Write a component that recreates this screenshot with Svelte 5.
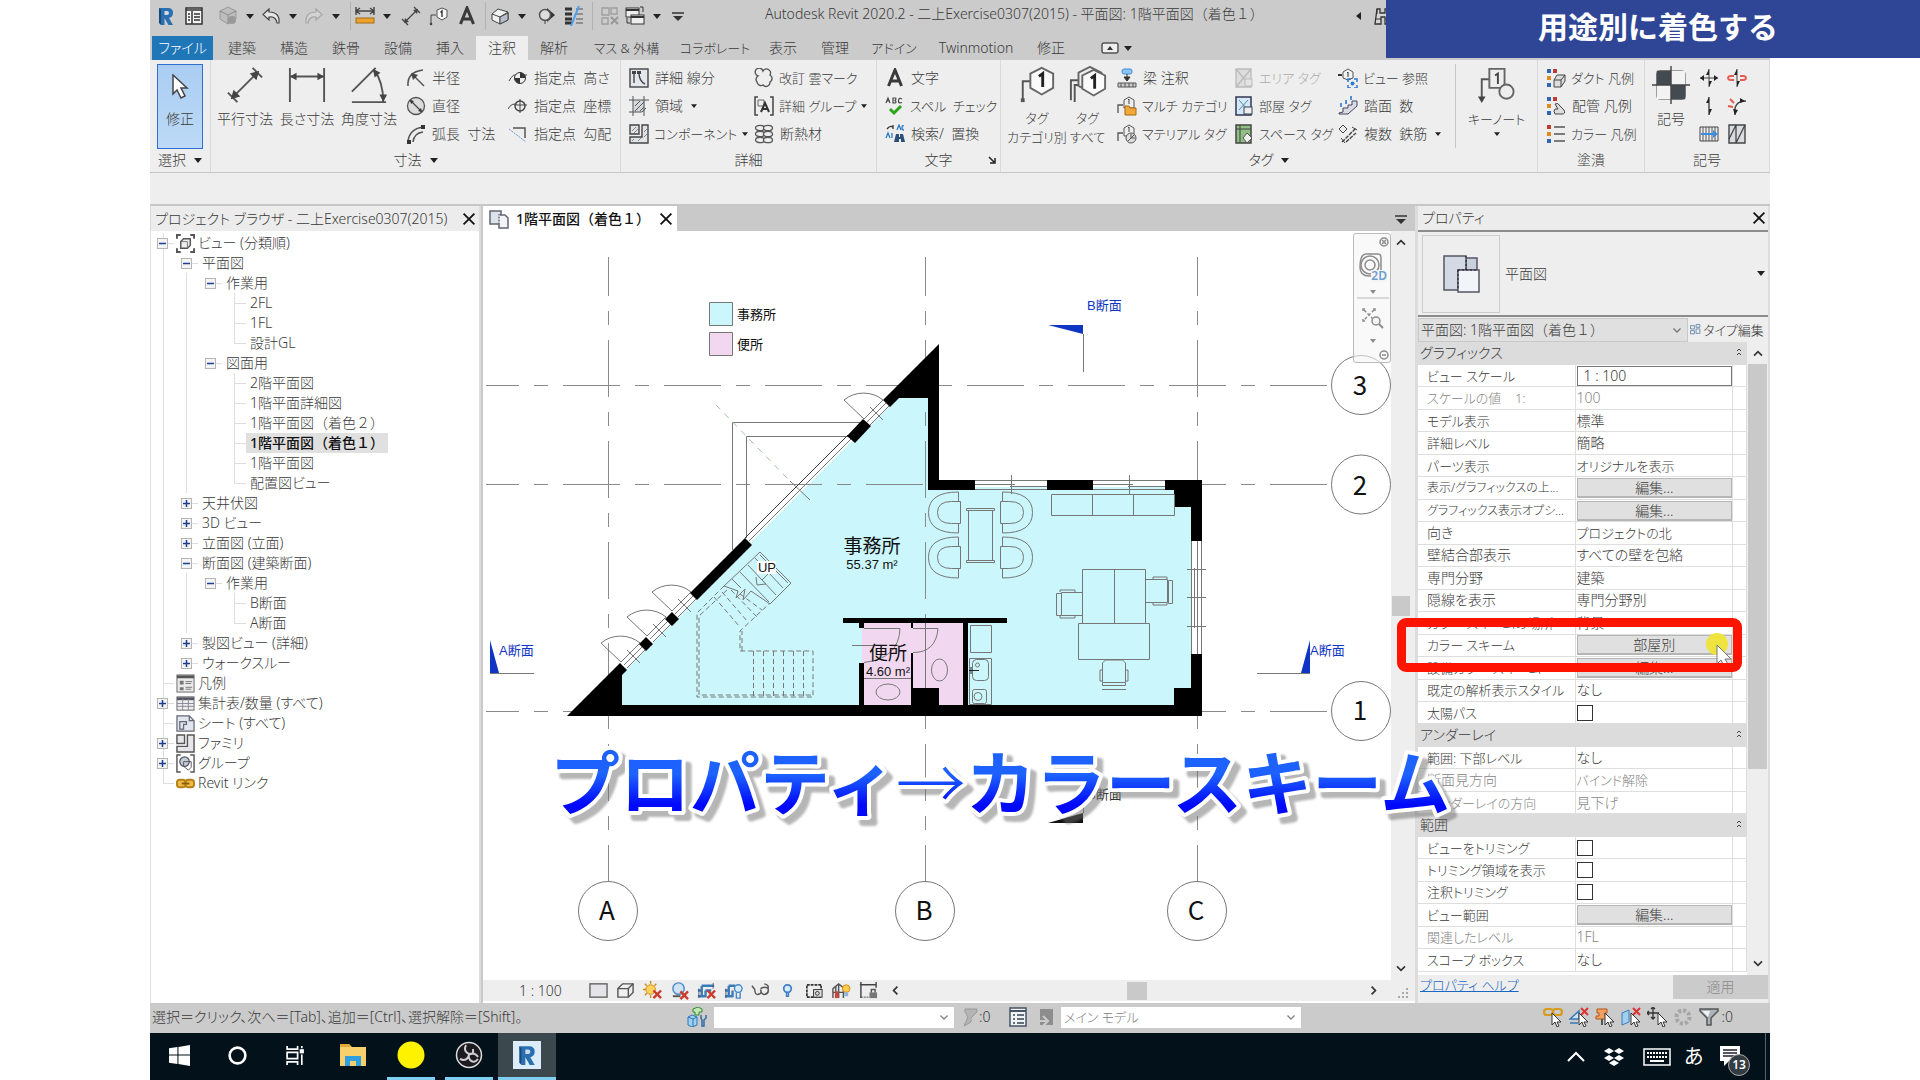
<script lang="ts">
  const icons: Record<string, string> = {
    revit: '<path d="M3 2h9q5 0 5 5 0 4-4 5l4 7h-4.500l-4-7v7H5z" fill="#2a6fb0"/><path d="M8.500 5v4h2.500q2 0 2-2t-2-2z" fill="#cfdcea"/><path d="M3 2l2 2v15l-2-2z" fill="#174a7c"/>',
    panel: '<rect x="2" y="2" width="16" height="16" fill="#f4f4f4" stroke="#333" stroke-width="1.500"/><path d="M2 4h16M8 5v13M4 8h2M4 11h2M4 14h2M10 8h6M10 11h6M10 14h6" stroke="#333" stroke-width="1.500"/>',
    cube: '<path d="M10 1l8 4v8l-8 5-8-5V5z" fill="#bdbdbd" stroke="#999"/><path d="M2 5l8 4 8-4M10 9v9" stroke="#8d8d8d"/><circle cx="14" cy="14" r="4" fill="#999"/>',
    undo: '<path d="M8 3L2 8.500 8 14v-3q7-1 8 6h2q1-11-10-11z" fill="#e6e6e6" stroke="#444" stroke-width="1.200"/>',
    redo: '<path d="M12 3l6 5.500-6 5.500v-3q-7-1-8 6H2Q1 6 12 6z" fill="#d3d3d3" stroke="#a5a5a5" stroke-width="1.200"/>',
    measure: '<path d="M1 5h18M5 2L1 5l4 3M15 2l4 3-4 3M1 1v8M19 1v8" stroke="#444" stroke-width="1.400"/><rect x="1" y="12" width="18" height="5" fill="#eba32d" stroke="#a46b12"/>',
    align: '<path d="M4 16L16 4M1 13l6 6M13 1l6 6" stroke="#444" stroke-width="1.300"/><path d="M3 17l1-5 4 4zM17 3l-1 5-4-4z" fill="#444"/>',
    tagq: '<path d="M2 18V9h5" stroke="#444"/><circle cx="2" cy="18" r="1.300" fill="#444"/><path d="M8 4l5-2 5 2v7l-5 3-5-3z" fill="#f8f8f8" stroke="#555"/><path d="M11.500 6.500L13 5v6" stroke="#333" stroke-width="1.400"/>',
    bigA: '<path d="M3.500 18L10 2l6.500 16M6 13h8" stroke="#3a3a3a" stroke-width="3"/>',
    house: '<path d="M2 8l6-5 10 3v8l-8 4-8-4z" fill="#f2f2f2" stroke="#444"/><path d="M2 8l8 3 8-5M10 11v7" stroke="#444"/><path d="M10 11l8-4v7l-8 4z" fill="#b7bfcc" stroke="#444"/>',
    section: '<path d="M11 2l8 7-8 7z" fill="#333"/><circle cx="9" cy="9" r="5.500" fill="#ddd" stroke="#555" stroke-width="1.500"/><path d="M9 14v4" stroke="#444"/>',
    thin: '<path d="M1 3h7M1 8h7M1 13h7M1 17h7" stroke="#333" stroke-width="3"/><path d="M12 3h7M12 8h7M12 13h7M12 17h7" stroke="#555"/><path d="M15 0L7 20" stroke="#4aa0ee" stroke-width="2"/>',
    hidden: '<path d="M2 2h7v7H2zM11 2h6v6h-6zM2 12h6v6H2z" stroke="#a0a0a0" stroke-width="1.400"/><path d="M11 11l7 7M18 11l-7 7" stroke="#999" stroke-width="2"/>',
    swap: '<rect x="1" y="2" width="13" height="9" fill="#eee" stroke="#333"/><rect x="6" y="9" width="13" height="9" fill="#eee" stroke="#333"/><path d="M1 4h13M6 11h13" stroke="#333" stroke-width="2"/><path d="M15 1h3v5M2 12v5h3" stroke="#333"/>',
    custom: '<path d="M4 7h12" stroke="#333" stroke-width="1.500"/><path d="M5 10h10l-5 5z" fill="#333"/>',
    binoc: '<path d="M4 3h3v4h5V3h3l3 15h-6v-7H8v7H2z" fill="#d6d6d6" stroke="#333" stroke-width="1.300"/><path d="M2 13h6M12 13h6M4 3v5M15 3v5" stroke="#333"/>',
    radius: '<path d="M2 18Q1 4 17 2" stroke="#555" stroke-width="1.600"/><path d="M7 7l11 11" stroke="#555" stroke-width="1.400"/><path d="M5 5l7 2-5 5z" fill="#444"/>',
    diameter: '<circle cx="10" cy="10" r="8.500" fill="#dcdcdc" stroke="#555" stroke-width="1.300"/><path d="M4 4l12 12" stroke="#444" stroke-width="1.300"/><path d="M4 4l4 1-3 3zM16 16l-4-1 3-3z" fill="#333"/>',
    arclen: '<path d="M2 18Q3 5 17 3" stroke="#555" stroke-width="1.500"/><path d="M7 18Q8 9 17 8" stroke="#555" stroke-width="1.500"/><path d="M15 1h4v4h-4zM1 16h4v4H1z" fill="#333"/>',
    elev: '<path d="M1 13q4-8 9-6h9" stroke="#444"/><circle cx="12" cy="10" r="5.500" fill="#eee" stroke="#333"/><path d="M12 10V4.500A5.500 5.500 0 0117.500 10zM12 10v5.500A5.500 5.500 0 016.500 10z" fill="#333"/>',
    coord: '<path d="M0 13q4-7 9-4h10M12 3v14" stroke="#444"/><circle cx="12" cy="10" r="5" fill="none" stroke="#444" stroke-width="1.500"/>',
    slope: '<path d="M1 5l17 13" stroke="#6a9bd0" stroke-dasharray="2 1"/><path d="M5 4h12v10" stroke="#555" stroke-width="1.500"/>',
    dline: '<rect x="1" y="1" width="18" height="18" fill="#e4e8ee" stroke="#444" stroke-width="1.400"/><path d="M5 5v10M10 5q0 8 6 11" stroke="#444" stroke-width="1.400"/><path d="M3 3h4v3H3zM8 3h4v3H8z" fill="#444"/>',
    region: '<rect x="4" y="4" width="12" height="12" fill="#d5d8dc"/><path d="M4 0v20M15 0v20M0 4h20M0 16h13l4-4M6 10l5-5M6 15l9-9M11 15l4-4" stroke="#555"/>',
    comp: '<path d="M1 1h9v9H1zM13 1h6v18H1v-6h12z" fill="#dfe2e6" stroke="#444" stroke-width="1.400"/><path d="M3 7l4-4M5 9l4-4M3 17l2-2M9 17l3-3M15 8l3-3M15 13l3-3" stroke="#888"/>',
    cloud: '<path d="M4 8a4 4 0 115-5 4 4 0 017 4 4 4 0 010 7 4 4 0 01-7 3 4 4 0 01-6-3 4 4 0 011-6z" fill="#eee" stroke="#555" stroke-width="1.400"/>',
    dgroup: '<path d="M4 1H1v18h3M16 1h3v18h-3" stroke="#444" stroke-width="1.500"/><path d="M4 4h6v6H4z" stroke="#666"/><path d="M7 16l4-9 4 9M9 13h4" stroke="#333" stroke-width="2"/>',
    insul: '<g stroke="#555" stroke-width="1.300" fill="#eee"><ellipse cx="6" cy="4" rx="4.500" ry="2.700"/><ellipse cx="14" cy="4" rx="4.500" ry="2.700"/><ellipse cx="6" cy="10" rx="4.500" ry="2.700"/><ellipse cx="14" cy="10" rx="4.500" ry="2.700"/><ellipse cx="6" cy="16" rx="4.500" ry="2.700"/><ellipse cx="14" cy="16" rx="4.500" ry="2.700"/></g>',
    spell: '<path d="M1 7l2-5 2 5M2 5h2M8 2v5h2q2-1 0-2.500Q12 2 10 2zM17 3q-3-2-3.500 1.500T17 6.500" stroke="#444" stroke-width="1.200"/><path d="M5 13l4 4 7-7" stroke="#2ea31c" stroke-width="3"/>',
    find: '<path d="M2 5q3-4 6-2M8 1v4" stroke="#333" stroke-width="1.300"/><path d="M12 6l2-5 2 5M19 2q-2-1-2 1.500T19 6M1 14l2-5 2 5M7 9v5" stroke="#2d78c8" stroke-width="1.300"/><path d="M9 18l2-8h3v3h1v-3h3l2 8h-4v-3h-2v3z" fill="#2c4f78"/>',
    beam: '<rect x="5" y="1" width="10" height="5" rx="2" fill="#8cc4f7" stroke="#3f8edb"/><path d="M10 6v5M7 9l3 4 3-4z" stroke="#333" fill="#333"/><path d="M1 15h18v4H1z" fill="#ccc" stroke="#555"/><path d="M4 15v4M8 15v4M12 15v4M16 15v4" stroke="#555"/>',
    multi: '<path d="M1 17V9h5" stroke="#555" stroke-width="1.300"/><path d="M7 4l5-3 5 3v8H7z" fill="#eee" stroke="#555"/><path d="M11 4l1-1v5" stroke="#444"/><path d="M8 10h4l1 2h6v7H8z" fill="#f1a93a" stroke="#a8690c"/>',
    mat: '<path d="M1 17V9h5" stroke="#555" stroke-width="1.300"/><path d="M7 4l5-3 5 3v8H7z" fill="#eee" stroke="#555"/><path d="M11 4l1-1v5" stroke="#444"/><circle cx="14" cy="14" r="5" fill="#ddd" stroke="#555"/><path d="M11 17l6-6M14 10v4h4" stroke="#555"/>',
    area: '<path d="M2 1h15v18H2zM2 1l15 18M17 1L2 19" fill="#ddd" stroke="#bbb" stroke-width="1.300"/><rect x="11" y="11" width="7" height="7" fill="#e4e4e4" stroke="#bbb"/>',
    room: '<path d="M2 1h15v18H2z" fill="#d5e8f6" stroke="#335" stroke-width="1.500"/><path d="M5 4l9 10M14 4L5 14" stroke="#58a" /><rect x="10" y="11" width="8" height="7" fill="#eee" stroke="#345"/>',
    space: '<path d="M2 1h15v18H2z" fill="#8fbf83" stroke="#444" stroke-width="1.500"/><path d="M2 5h15M6 1v18" stroke="#444"/><path d="M13 9l5 5-5 5-4-5z" fill="#eee" stroke="#555"/>',
    viewref: '<path d="M0 7h4" stroke="#333" stroke-width="2"/><path d="M5 4l5-3 5 3v6l-5 2-5-2z" fill="#f3f3f3" stroke="#555"/><path d="M9 5l1-1v5" stroke="#333"/><path d="M10 14v-3h3M16 11h3v3M19 17v3h-3M13 20h-3v-3" stroke="#2b78d0" stroke-width="1.500"/><circle cx="14.500" cy="15.500" r="2" fill="#2b78d0"/>',
    stepn: '<path d="M1 17l4-1v-4h5V9h4V5h5v5l-9 8H1z" fill="#d9dde2" stroke="#446"/><path d="M3 7v4M8 4v4M13 0v4" stroke="#2b78d0" stroke-width="1.600"/>',
    rebar: '<path d="M5 1l4 4-4 4-4-4z" fill="#eee" stroke="#444"/><path d="M4 18L18 4M8 18L18 9" stroke="#444" stroke-width="1.400" stroke-dasharray="4 1"/><path d="M3 14l4 5M14 3l5 3" stroke="#444"/>',
    duct: '<path d="M1 1h4v4H1z" fill="#2e66b5"/><path d="M7 1h4v4H7z" fill="#c0392b"/><path d="M1 8h4v4H1z" fill="#e08a1e"/><path d="M1 15h4v4H1z" fill="#2e66b5"/><path d="M8 12l3-5h8v6l-4 6H8z" fill="#ddd" stroke="#444"/><path d="M8 12h7v7M15 12l4-5" stroke="#444"/>',
    pipe: '<path d="M1 1h4v4H1z" fill="#2e66b5"/><path d="M7 1h4v4H7z" fill="#c0392b"/><path d="M1 8h4v4H1z" fill="#e08a1e"/><path d="M1 15h4v4H1z" fill="#2e66b5"/><path d="M9 8q3-2 5 2l4 4q2 4-2 4H9q-2-3 0-5h3z" fill="#ddd" stroke="#444"/>',
    color: '<path d="M1 1h4v4H1z" fill="#c0392b"/><path d="M1 8h4v4H1z" fill="#e08a1e"/><path d="M1 15h4v4H1z" fill="#2e66b5"/><path d="M8 3h11M8 10h11M8 17h11" stroke="#555" stroke-width="1.500"/>',
    s1: '<path d="M10 1v18M1 10h18" stroke="#444"/><path d="M10 1l-3 6h3zM10 19l3-6h-3z" fill="#222"/><path d="M1 10l4-3v6zM19 10l-4-3v6z" fill="#222"/>',
    s2: '<path d="M10 1v18" stroke="#444"/><path d="M10 1l-3 6h3zM10 19l3-6h-3z" fill="#222"/><path d="M7 8H4q-3 0-3 2t3 2h3M13 8h3q3 0 3 2t-3 2h-3" stroke="#e35b50" stroke-width="1.800"/>',
    s3: '<path d="M10 1v18" stroke="#444" stroke-width="1.400"/><path d="M10 1l-3 6h3zM10 19l3-6h-3z" fill="#222"/>',
    s4: '<path d="M19 5Q6 5 8 19" stroke="#444" stroke-width="1.400"/><path d="M13 2l5 3-5 2zM6 13l2 6 3-5z" fill="#222"/><path d="M1 10l5 1M3 3l4 4" stroke="#e35b50" stroke-width="2"/>',
    s5: '<path d="M1 3h18v14H1z" fill="#eee" stroke="#444"/><path d="M4 3v14M7 3v14M10 3v14M13 3v14M16 3v14" stroke="#555"/><path d="M2 10h14" stroke="#3d8de0" stroke-width="2"/><path d="M14 6l5 4-5 4z" fill="#3d8de0"/>',
    s6: '<path d="M2 1h16v18H2z" fill="#d9dce0" stroke="#444" stroke-width="1.400"/><path d="M2 15L9 1v18L18 1M9 1v18" stroke="#444" stroke-width="1.300"/>',
    views: '<path d="M1 5V1h4M15 1h4v4M19 15v4h-4M5 19H1v-4" stroke="#555" stroke-width="2"/><path d="M5 8l3-3h7v7l-3 3H5z" fill="#eee" stroke="#555" stroke-width="1.500"/><path d="M5 8h7v7" stroke="#777"/>',
    legend: '<rect x="1" y="1" width="18" height="18" fill="#eaeaea" stroke="#666"/><path d="M1 3h18" stroke="#555" stroke-width="3"/><path d="M4 7h4v4H4zM4 14h4v3H4z" fill="#777"/><path d="M10 8h7M10 10h6M10 14h7M10 16h6" stroke="#777"/>',
    sched: '<rect x="1" y="3" width="18" height="14" fill="#eee" stroke="#666"/><path d="M1 5h18" stroke="#556" stroke-width="3"/><path d="M1 10h18M1 13h18M7 5v12M13 5v12" stroke="#889"/>',
    sheet: '<path d="M1 2h13l5 5v11H1z" fill="#dfe6ee" stroke="#667" stroke-width="1.300"/><path d="M14 2v5h5M4 8h7v3h-3v5H4z" stroke="#667" stroke-width="1.300"/>',
    family: '<path d="M1 1h8v9H1zM12 1h7v18H1v-6h11z" fill="#e6e6ea" stroke="#555" stroke-width="1.500"/>',
    group: '<path d="M5 1H1v18h4M15 1h4v18h-4" stroke="#555" stroke-width="1.500"/><circle cx="9" cy="8" r="5" fill="#c6ccd6" stroke="#556" stroke-width="1.300"/><path d="M8 8h8v6l-3 3-5-4z" stroke="#556"/>',
    link: '<rect x="1" y="6" width="9" height="8" rx="3" fill="#eebb44" stroke="#b5801a" stroke-width="2"/><rect x="10" y="6" width="9" height="8" rx="3" fill="#eebb44" stroke="#b5801a" stroke-width="2"/><path d="M6 10h8" stroke="#8a5d0c" stroke-width="2"/>',
    plan: '<path d="M1 2h11v13H1z" fill="#dde3ea" stroke="#667" stroke-width="1.500"/><path d="M10 6h6l3 3v10h-9z" fill="#f2f4f7" stroke="#667" stroke-width="1.500"/><path d="M10 6v9" stroke="#fff" stroke-dasharray="2 1"/>',
    detail: '<rect x="1" y="3" width="18" height="14" fill="#e4e4e8" stroke="#666" stroke-width="1.500"/>',
    box: '<path d="M2 8l5-5h11v9l-5 5H2z" fill="#f0f0f0" stroke="#555" stroke-width="1.500"/><path d="M2 8h11v9M13 8l5-5" stroke="#555" stroke-width="1.500"/>',
    sun: '<circle cx="8" cy="9" r="5" fill="#ffd25a" stroke="#c98a1e"/><path d="M8 0v3M8 15v3M0 9h3M2 3l2 2M14 3l-2 2M2 15l2-2" stroke="#c98a1e" stroke-width="1.500"/><path d="M11 10l8 8M19 10l-8 8" stroke="#cc3a2a" stroke-width="2.500"/>',
    shadow: '<circle cx="9" cy="8" r="6" fill="#cfe3f6" stroke="#4b87c4" stroke-width="1.500"/><path d="M3 16h8" stroke="#555" stroke-width="2"/><path d="M11 11l8 8M19 11l-8 8" stroke="#cc3a2a" stroke-width="2.500"/>',
    crop: '<path d="M5 5h13M5 5v10M1 10h4M1 16h8M9 10v7M9 10h6" stroke="#3a7ab8" stroke-width="2.500"/><path d="M2 8v10M17 2v6" stroke="#556"/><path d="M11 10l8 8M19 10l-8 8" stroke="#cc3a2a" stroke-width="2.500"/>',
    crop2: '<path d="M5 5h7M5 5v10M1 10h4M1 16h8M9 10v7" stroke="#3a7ab8" stroke-width="2.500"/><path d="M2 8v10" stroke="#556"/><circle cx="15" cy="8" r="4" fill="#d8ebfb" stroke="#4b87c4" stroke-width="1.500"/><path d="M13 12v6h4v-6" stroke="#4b87c4" stroke-width="1.500"/>',
    glasses: '<path d="M4 9q0 6 4 5t2-5M10 8q5-3 8 0 1 5-3 6t-5-5M4 9L1 5M18 8q1-4-4-5" stroke="#555" stroke-width="1.500"/>',
    bulb: '<circle cx="10" cy="8" r="4" fill="#d5e9fb" stroke="#3f7fc4" stroke-width="1.800"/><path d="M9 12v4h2v-4" stroke="#3f7fc4" stroke-width="1.500"/>',
    tempv: '<rect x="2" y="4" width="15" height="13" stroke="#333" stroke-width="1.800" stroke-dasharray="3 1"/><rect x="9" y="9" width="9" height="8" fill="#ddd" stroke="#333"/><circle cx="13" cy="13" r="2" stroke="#333"/>',
    analyt: '<path d="M1 18V8l6-5 5 4v11M1 12h12M7 3v15M4 6v12" stroke="#555" stroke-width="1.500"/><path d="M3 11h4v7H3z" fill="#c9463a"/><circle cx="15" cy="8" r="4" fill="#ffcc4e" stroke="#d08a20"/><path d="M13 12h4v4h-4z" fill="#8fb6da"/>',
    constr: '<path d="M2 1v17M1 4h17M18 1v6" stroke="#444" stroke-width="1.500"/><path d="M2 17h9" stroke="#444" stroke-dasharray="2 1"/><rect x="11" y="12" width="8" height="6" fill="#777"/><path d="M13 12V9h4v3" stroke="#555" stroke-width="1.500"/>',
    workset: '<path d="M1 10l4-2 5 2v8l-5 2-4-2z" fill="#9fd0f0" stroke="#2c78b8"/><path d="M1 10l5 2 4-2M6 12v8" stroke="#2c78b8"/><path d="M6 2l5-2 4 2v3h-3v3H8V5H6z" fill="#c6e8b8" stroke="#2f8a2a"/><path d="M14 8v3l1 2v6h2v-6l2-2V8" stroke="#346aa4" stroke-width="1.500"/>',
    filterg: '<path d="M6 2h12v3l-6 6v4l-7 4 4-9-3-5z" fill="#b5b5b5" stroke="#999"/>',
    options: '<rect x="2" y="1" width="16" height="18" fill="#f2f2f2" stroke="#456" stroke-width="1.500"/><path d="M2 4h16" stroke="#456" stroke-width="2"/><path d="M5 8h2M5 12h2M5 16h2M9 8h7M9 12h7M9 16h7" stroke="#345" stroke-width="1.500"/>',
    goto: '<rect x="6" y="2" width="13" height="16" fill="#8d8d8d"/><path d="M1 14h11M9 9l5 5-5 5" stroke="#ccc" stroke-width="2"/>',
    sellink: '<rect x="1" y="2" width="9" height="6" rx="3" stroke="#d99b1e" stroke-width="2.200"/><rect x="10" y="2" width="9" height="6" rx="3" stroke="#d99b1e" stroke-width="2.200"/><path d="M9 6v12l3-3 2 5 2-1-2-4h4z" fill="#fff" stroke="#333"/>',
    selunder: '<path d="M1 12l9-8v8zM1 16h8" fill="#cfe3f6" stroke="#3a7ab8" stroke-width="1.500"/><path d="M12 1l7 7M19 1l-7 7" stroke="#d33" stroke-width="2"/><path d="M10 6v12l3-3 2 5 2-1-2-4h4z" fill="#fff" stroke="#333"/>',
    selpin: '<path d="M2 2h10v4h-2v3h3v3H1V9h3V6H2z" fill="#f0a060" stroke="#b5541a"/><path d="M7 12v6" stroke="#555" stroke-width="2"/><path d="M10 6v12l3-3 2 5 2-1-2-4h4z" fill="#fff" stroke="#333"/>',
    selface: '<path d="M1 6l7-3v12l-7 3z" fill="#9fd0f0" stroke="#3a7ab8"/><path d="M12 1l7 7M19 1l-7 7" stroke="#d33" stroke-width="2"/><path d="M10 6v12l3-3 2 5 2-1-2-4h4z" fill="#fff" stroke="#333"/>',
    seldrag: '<path d="M6 0v12M0 6h12M4 2l2-2 2 2M2 4L0 6l2 2M4 10l2 2 2-2" stroke="#333" stroke-width="1.300"/><path d="M11 6v12l3-3 2 5 2-1-2-4h4z" fill="#fff" stroke="#333"/>',
    busy: '<circle cx="10" cy="10" r="6.500" stroke="#a5a5a5" stroke-width="4" stroke-dasharray="3 2"/>',
    filter: '<path d="M1 2h18v2l-7 7v7H8v-7L1 4z" fill="#aab4ba" stroke="#555" stroke-width="1.500"/><path d="M3 4h8l-2 6z" fill="#eef1f3"/>',
    types: '<path d="M1 3h7v6H1zM11 1h7v5h-7zM1 12h7v6H1zM11 9h7v8h-7z" stroke="#5a7ea6" stroke-width="1.500"/>',
    close: '<path d="M4 4l12 12M16 4L4 16" stroke="#111" stroke-width="2"/>',
    up: '<path d="M5 12l5-5 5 5" stroke="#333" stroke-width="2"/>',
    down: '<path d="M5 8l5 5 5-5" stroke="#333" stroke-width="2"/>',
    left: '<path d="M12 6l-4 4 4 4" stroke="#333" stroke-width="1.800"/>',
    right: '<path d="M8 6l4 4-4 4" stroke="#333" stroke-width="1.800"/>',
    win: '<path d="M0 3l8-1v7H0zM9 2l11-2v9H9zM0 10h8v8l-8-1zM9 10h11v10L9 18z" fill="#fff"/>',
    cortana: '<circle cx="10" cy="10" r="7.500" stroke="#fff" stroke-width="2.500"/>',
    taskview: '<path d="M2 1v3h10V1M2 19v-3h10v3M2 7h10v6H2zM16 1v2M16 9v10" stroke="#fff" stroke-width="1.600"/><path d="M14 4h4v4h-4z" fill="#fff"/>',
    dropbox: '<path d="M5 1l5 3-5 3-5-3zM15 1l5 3-5 3-5-3zM5 8l5 3-5 3-5-3zM15 8l5 3-5 3-5-3zM10 13l5 3-5 3-5-3z" fill="#fff"/>'
  };

  type Small = [string, string, string?];
  const dimBig = [
    ['平行寸法', '<path d="M7 33L33 7M2 28l10 10M28 2l10 10" stroke="#555" stroke-width="2"/><path d="M5 35l3-10 7 7zM35 5l-3 10-7-7z" fill="#444"/>'],
    ['長さ寸法', '<path d="M2 2v36M38 2v36M2 11h36" stroke="#555" stroke-width="2"/><path d="M2 11l7-4v8zM38 11l-7-4v8z" fill="#444"/>'],
    ['角度寸法', '<path d="M2 38h36M2 27L27 2M25 4q10 12 10 34" stroke="#555" stroke-width="2"/><path d="M24 3l8 4-6 5zM35 38l-4-8h8z" fill="#444"/>']
  ];
  const dimA: Small[] = [['radius', '半径'], ['diameter', '直径'], ['arclen', '弧長\u00a0 寸法']];
  const dimB: Small[] = [['elev', '指定点\u00a0 高さ'], ['coord', '指定点\u00a0 座標'], ['slope', '指定点\u00a0 勾配']];
  const detA: Small[] = [['dline', '詳細 線分'], ['region', '領域', 'menu'], ['comp', 'コンポーネント', 'menu']];
  const detB: Small[] = [['cloud', '改訂 雲マーク'], ['dgroup', '詳細 グループ', 'menu'], ['insul', '断熱材']];
  const txt: Small[] = [['bigA', '文字'], ['spell', 'スペル\u00a0 チェック'], ['find', '検索/\u00a0 置換']];
  const tagA: Small[] = [['beam', '梁 注釈'], ['multi', 'マルチ カテゴリ'], ['mat', 'マテリアル タグ']];
  const tagB: Small[] = [['area', 'エリア タグ', 'off'], ['room', '部屋 タグ'], ['space', 'スペース タグ']];
  const tagC: Small[] = [['viewref', 'ビュー 参照'], ['stepn', '踏面\u00a0 数'], ['rebar', '複数\u00a0 鉄筋', 'menu']];
  const leg: Small[] = [['duct', 'ダクト 凡例'], ['pipe', '配管 凡例'], ['color', 'カラー 凡例']];

  const tabs = ['建築', '構造', '鉄骨', '設備', '挿入', '注釈', '解析', 'マス & 外構', 'コラボレート', '表示', '管理', 'アドイン', 'Twinmotion', '修正'];
  const tabSize = ['', '', '', '', '', '', '', 't93', 't84', '', '', 't66', 't98', ''];
  const kana = (s: string) => /[ァ-ヶー]{2,}/.test(s);

  // g: one character per ancestor column, "|" draws the line
  const tree: { g: string; n: string; t: string; i?: string; on?: boolean }[] = [
    { g: '', n: '-', t: 'ビュー (分類順)', i: 'views' },
    { g: '|', n: '-', t: '平面図' },
    { g: '||', n: '-', t: '作業用' },
    { g: '|||', n: 'T', t: '2FL' },
    { g: '|||', n: 'T', t: '1FL' },
    { g: '|||', n: 'L', t: '設計GL' },
    { g: '||', n: '-', t: '図面用' },
    { g: '|| ', n: 'T', t: '2階平面図' },
    { g: '|| ', n: 'T', t: '1階平面詳細図' },
    { g: '|| ', n: 'T', t: '1階平面図（着色２）' },
    { g: '|| ', n: 'T', t: '1階平面図（着色１）', on: true },
    { g: '|| ', n: 'T', t: '1階平面図' },
    { g: '|| ', n: 'L', t: '配置図ビュー' },
    { g: '|', n: '+', t: '天井伏図' },
    { g: '|', n: '+', t: '3D ビュー' },
    { g: '|', n: '+', t: '立面図 (立面)' },
    { g: '|', n: '-', t: '断面図 (建築断面)' },
    { g: '||', n: '-', t: '作業用' },
    { g: '|| ', n: 'T', t: 'B断面' },
    { g: '|| ', n: 'L', t: 'A断面' },
    { g: '|', n: '+', t: '製図ビュー (詳細)' },
    { g: '|', n: '+', t: 'ウォークスルー' },
    { g: '', n: 'T', t: '凡例', i: 'legend' },
    { g: '', n: '+', t: '集計表/数量 (すべて)', i: 'sched' },
    { g: '', n: 'T', t: 'シート (すべて)', i: 'sheet' },
    { g: '', n: '+', t: 'ファミリ', i: 'family' },
    { g: '', n: '+', t: 'グループ', i: 'group' },
    { g: '', n: 'L', t: 'Revit リンク', i: 'link' }
  ];

  type Row = { k: 'head' | 'text' | 'off' | 'btn' | 'input' | 'check'; l: string; v?: string };
  const props: Row[] = [
    { k: 'head', l: 'グラフィックス' },
    { k: 'input', l: 'ビュー スケール', v: '1 : 100' },
    { k: 'off', l: 'スケールの値\u00a0\u00a0\u00a0 1:', v: '100' },
    { k: 'text', l: 'モデル表示', v: '標準' },
    { k: 'text', l: '詳細レベル', v: '簡略' },
    { k: 'text', l: 'パーツ表示', v: 'オリジナルを表示' },
    { k: 'btn', l: '表示/グラフィックスの上...', v: '編集...' },
    { k: 'btn', l: 'グラフィックス表示オプシ...', v: '編集...' },
    { k: 'text', l: '向き', v: 'プロジェクトの北' },
    { k: 'text', l: '壁結合部表示', v: 'すべての壁を包絡' },
    { k: 'text', l: '専門分野', v: '建築' },
    { k: 'text', l: '隠線を表示', v: '専門分野別' },
    { k: 'text', l: 'カラー スキームの場所', v: '背景' },
    { k: 'btn', l: 'カラー スキーム', v: '部屋別' },
    { k: 'btn', l: '設備カラー スキーム', v: '編集...' },
    { k: 'text', l: '既定の解析表示スタイル', v: 'なし' },
    { k: 'check', l: '太陽パス' },
    { k: 'head', l: 'アンダーレイ' },
    { k: 'text', l: '範囲: 下部レベル', v: 'なし' },
    { k: 'off', l: '断面見方向', v: 'バインド解除' },
    { k: 'off', l: 'アンダーレイの方向', v: '見下げ' },
    { k: 'head', l: '範囲' },
    { k: 'check', l: 'ビューをトリミング' },
    { k: 'check', l: 'トリミング領域を表示' },
    { k: 'check', l: '注釈トリミング' },
    { k: 'btn', l: 'ビュー範囲', v: '編集...' },
    { k: 'off', l: '関連したレベル', v: '1FL' },
    { k: 'text', l: 'スコープ ボックス', v: 'なし' }
  ];

  const viewTools = ['detail', 'box', 'sun', 'shadow', 'crop', 'crop2', 'glasses', 'bulb', 'tempv', 'analyt', 'constr', 'left'];
  const selTools = ['sellink', 'selunder', 'selpin', 'selface', 'seldrag', 'busy', 'filter'];
  const casements = [[0, 0], [26, -26], [51, -51], [243, -243]];
</script>

{#snippet icon(name: string)}
  <svg class="ic" viewBox="0 0 20 20" fill="none" aria-hidden="true">{@html icons[name]}</svg>
{/snippet}

{#snippet tri()}<svg class="tri" viewBox="0 0 8 5" aria-hidden="true"><path d="M0 0h8L4 5z" /></svg>{/snippet}

{#snippet col(items: Small[])}
  <div class="col">
    {#each items as [i, t, f]}
      <button class="small" class:k={kana(t)} disabled={f === 'off'}>
        {@render icon(i)}<span>{t}</span>{#if f === 'menu'}{@render tri()}{/if}
      </button>
    {/each}
  </div>
{/snippet}

{#snippet big(label: string, art: string)}
  <button class="big"><svg viewBox="0 0 40 40" fill="none" aria-hidden="true">{@html art}</svg><span>{label}</span></button>
{/snippet}

<div class="frame">
  <header class="titlebar">
    <button class="q" aria-label="Revit">{@render icon('revit')}</button>
    <button class="q" aria-label="プロパティ">{@render icon('panel')}</button>
    <span class="gap"></span>
    {#each ['cube', 'undo', 'redo'] as i}
      <button class="q n" aria-label={i}>{@render icon(i)}</button><button class="qa" aria-label="メニュー">{@render tri()}</button>
    {/each}
    <i class="sep"></i>
    <button class="q n" aria-label="計測">{@render icon('measure')}</button><button class="qa" aria-label="メニュー">{@render tri()}</button>
    {#each ['align', 'tagq', 'bigA'] as i}<button class="q" aria-label={i}>{@render icon(i)}</button>{/each}
    <i class="sep"></i>
    <button class="q n" aria-label="3D">{@render icon('house')}</button><button class="qa" aria-label="メニュー">{@render tri()}</button>
    {#each ['section', 'thin'] as i}<button class="q" aria-label={i}>{@render icon(i)}</button>{/each}
    <i class="sep"></i>
    <button class="q" aria-label="非表示を閉じる">{@render icon('hidden')}</button>
    <button class="q n" aria-label="切り替え">{@render icon('swap')}</button><button class="qa" aria-label="メニュー">{@render tri()}</button>
    <button class="q n" aria-label="カスタマイズ">{@render icon('custom')}</button>
    <h1>Autodesk Revit 2020.2 - 二上Exercise0307(2015) - 平面図: 1階平面図（着色１）</h1>
    <div class="search"><svg class="tl" viewBox="0 0 5 8" aria-hidden="true"><path d="M5 0v8L0 4z" /></svg>{@render icon('binoc')}</div>
  </header>

  <nav class="tabs">
    <button class="file">ファイル</button>
    {#each tabs as t, n}
      <button class={['tab', tabSize[n], { active: t === '注釈', k: kana(t) }]}>{t}</button>
    {/each}
    <button class="toggle" aria-label="リボン表示">
      <svg viewBox="0 0 18 12" fill="none" aria-hidden="true"><rect x="1" y="1" width="16" height="10" rx="2" fill="#eee" stroke="#555" stroke-width="1.500" /><path d="M6 8l3-4 3 4z" fill="#333" /></svg>
      {@render tri()}
    </button>
  </nav>

  <div class="ribbon">
    <section class="g g-sel">
      <div class="body">
        <button class="modify">
          <svg viewBox="0 0 18 26" aria-hidden="true"><path d="M2 1v19l4-4 4 8 4-2-4-8h6z" fill="#fff" stroke="#444" stroke-width="1.500" /></svg>
          <span>修正</span>
        </button>
      </div>
      <h2>選択 {@render tri()}</h2>
    </section>
    <section class="g g-dim">
      <div class="body">
        {#each dimBig as [l, a]}{@render big(l, a)}{/each}
        {@render col(dimA)}{@render col(dimB)}
      </div>
      <h2>寸法 {@render tri()}</h2>
    </section>
    <section class="g g-det">
      <div class="body">{@render col(detA)}{@render col(detB)}</div>
      <h2>詳細</h2>
    </section>
    <section class="g g-txt">
      <div class="body">{@render col(txt)}</div>
      <h2>文字<svg class="launch" viewBox="0 0 8 8" aria-hidden="true"><path d="M1 1l5 5M7 2v5H2" fill="none" stroke="#222" stroke-width="1.500" /></svg></h2>
    </section>
    <section class="g g-tag">
      <div class="body">
        <button class="big two"><svg viewBox="0 0 40 40" fill="none" aria-hidden="true"><path d="M5 36V16h9" stroke="#555" stroke-width="2" /><path d="M3 34h4v4H3z" fill="#555" /><path d="M25 2l12 6v15l-12 7-12-7V8z" fill="#fafafa" stroke="#666" stroke-width="2" /><path d="M22 11l4-3v14" stroke="#222" stroke-width="3" /></svg><span>タグ<br />カテゴリ別</span></button>
        <button class="big two"><svg viewBox="0 0 40 40" fill="none" aria-hidden="true"><path d="M2 36V15h8M6 38V20h8" stroke="#555" stroke-width="2" /><path d="M22 1l12 6v14l-12 6-12-6V7z" fill="#eee" stroke="#666" stroke-width="2" /><path d="M26 4l12 6v14l-12 7-12-7V10z" fill="#fafafa" stroke="#666" stroke-width="2" /><path d="M23 13l4-3v14" stroke="#222" stroke-width="3" /></svg><span>タグ<br />すべて</span></button>
        {@render col(tagA)}{@render col(tagB)}{@render col(tagC)}
        <div class="key">
          {@render big('キーノート', '<path d="M5 36V14h8" stroke="#555" stroke-width="2"/><path d="M1 32h8l-4 7z" fill="#444"/><path d="M13 3h16v20H13z" fill="#eee" stroke="#666" stroke-width="2"/><path d="M19 10l3-2v11" stroke="#444" stroke-width="2"/><circle cx="31" cy="27" r="7.500" fill="#eee" stroke="#666" stroke-width="2"/>')}
          {@render tri()}
        </div>
      </div>
      <h2>タグ {@render tri()}</h2>
    </section>
    <section class="g g-leg">
      <div class="body">{@render col(leg)}</div>
      <h2>塗潰</h2>
    </section>
    <section class="g g-sym">
      <div class="body">
        {@render big('記号', '<rect x="5" y="5" width="30" height="30" rx="3" fill="#f3f3f3" stroke="#555"/><path d="M20 5h15v15H20zM5 20h15v15H5z" fill="#f3f3f3"/><path d="M5 5h15v15H5zM20 20h15v15H20z" fill="#444a52"/><path d="M20 0v40M0 20h40" stroke="#444" stroke-width="1.500"/>')}
        <div class="grid6">
          {#each ['s1', 's2', 's3', 's4', 's5', 's6'] as i}<button aria-label={i}>{@render icon(i)}</button>{/each}
        </div>
      </div>
      <h2>記号</h2>
    </section>
  </div>
  <div class="options"></div>

  <main>
    <aside class="browser">
      <div class="phead"><span>プロジェクト ブラウザ - 二上Exercise0307(2015)</span><button aria-label="閉じる">{@render icon('close')}</button></div>
      <ul>
        {#each tree as r, n}
          <li>
            {#each r.g as c, d}
              <i class="cell" class:line={c === '|' && d < 2}></i>
            {/each}
            {#if r.n === '-' || r.n === '+'}
              <i class="cell stem" class:line={r.g === ''}><button class="exp" aria-label={r.t}><svg viewBox="0 0 9 9" aria-hidden="true"><path d={r.n === '+' ? 'M1 4.500h7M4.500 1v7' : 'M1 4.500h7'} stroke="#1d3f8f" stroke-width="1.500" /></svg></button></i>
            {:else}
              <i class={['cell', 'stem', r.n === 'T' ? 'line' : 'half']}></i>
            {/if}
            {#if r.i}{@render icon(r.i)}{/if}
            <span class:on={r.on} class:full={r.t.includes('（')}>{r.t}</span>
          </li>
        {/each}
      </ul>
    </aside>

    <section class="view">
      <div class="doctabs">
        <div class="doctab">{@render icon('plan')}<b class="full">1階平面図（着色１）</b><button aria-label="閉じる">{@render icon('close')}</button></div>
        <button class="list" aria-label="一覧">{@render icon('custom')}</button>
      </div>
      <div class="canvasrow">
        <div class="canvas">
          <svg class="plan" viewBox="483 231 908 749" preserveAspectRatio="xMidYMid meet" fill="none" stroke="#777" stroke-width="1">
            <!-- room fills -->
            <g stroke="none">
              <path d="M622 705V671L895 398h33v88h263v219z" fill="#cbf6fb" />
              <path d="M862 623h101v82H862z" fill="#f1d8f0" />
            </g>
            <!-- grid lines -->
            <g stroke="#8a8a8a" stroke-dasharray="57 15 14 15">
              <path d="M608.500 257v624M925.500 257v624M1197.500 257v624" stroke-dashoffset="18" />
              <path d="M486 385.500h846M486 484.500h846M486 711.500h846" stroke-dashoffset="24" />
            </g>
            <!-- legend -->
            <path d="M709.500 302.500h23v23h-23z" fill="#cbf6fb" />
            <path d="M709.500 332.500h23v23h-23z" fill="#f1d8f0" />
            <!-- canopy -->
            <path d="M862 422.500H732.500V550M848 436.500H746.500V538M749 541L851 439" />
            <path d="M745 538L848 435" stroke="#333" />
            <path d="M716 405l74 76" stroke="#9fc09f" stroke-dasharray="6 6" />
            <path d="M790 481l20 19" />
            <!-- casement windows -->
            {#each casements as [dx, dy]}
              <g transform={`translate(${dx} ${dy})`}>
                <path d="M621 662l19-18 6 6-19 19z" fill="#fff" stroke="none" />
                <path d="M621 662l-20-19A31 31 0 01640 643M621 662l19-19M627 668l19-19M624 665l19-19M627 650l13 13" />
              </g>
            {/each}
            <!-- external walls -->
            <g fill="#000" stroke="none">
              <path d="M567 716l53-53 7 7-5 5v30h569v-51h11v62z" />
              <path d="M646 637l7 7-7 7-7-7zM672 612l7 7-7 7-7-7zM690 593l55-55 7 7-55 55zM847 436l16-17 8 7-16 17z" />
              <path d="M883 400l56-56v136h36v10h-47v-92h-29l-9 9zM1047 480h46v10h-46zM1165 480h37v61h-11v-34h-17v-17h-9zM1174 688h20v20h-20z" />
              <path d="M843 618h164v5H968v82h-5v-82H843zM859 623h5v5h-5zM859 663h5v42h-5zM911 623h2v5h-2zM911 653h2v35h26v20h-28z" />
            </g>
            <!-- glazing -->
            <path d="M975 480h72v7h-72zM1093 480h72v7h-72zM1194 541h8v113h-8z" fill="#fff" stroke="none" />
            <path d="M975 480.500h72M975 484.500h40M1010 486.500h37M975 489.500h72M1093 480.500h72M1093 484.500h40M1128 486.500h37M1093 489.500h72M1011.500 475v19M1129.500 475v19" />
            <path d="M1191.500 541v113M1194.500 568v60M1197.500 541v113M1201.500 541v113M1187 569.500h19M1187 597.500h19M1187 626.500h19" />
            <!-- cabinets, table and armchairs -->
            <path d="M1051.500 494.500h123v21h-123zM1092.500 494v21M1133.500 494v21M968.500 510.500h24v50h-24zM966.500 508.500h28v2h-28zM966.500 560.500h28v2h-28z" />
            {#each [0, 45] as y}
              <path transform={`translate(0 ${y})`} d="M958.500 501v-9q-30 0-30 20.500T958.500 533v-9M960.500 501.500h-9q-14 0-14 11t14 11h9zM1002.500 501v-9q30 0 30 20.500T1002.500 533v-9M1000.500 501.500h9q14 0 14 11t-14 11h-9z" />
            {/each}
            <!-- desks and chairs -->
            <path d="M1082.500 569.500h63v54h-63zM1114.500 569v54M1078.500 623.500h71v36h-71z" />
            <path d="M1145.500 579.500h22v23h-22M1168.500 580.500h4v23h-4zM1153 579v-2h14v2M1153 603v2h14v-2M1082.500 592.500h-21v23h21M1056.500 593.500h5v22h-5zM1060 592v-2h15v2M1060 616v2h15v-2M1102.500 682v-19l3-3h17l3 3v19M1102.500 682.500h23v3h-23zM1102 689.500h24M1102 670h-2v11h2M1126 670h2v11h-2" />
            <!-- kitchenette -->
            <path d="M970.500 625.500h21v27h-21zM969.500 658.500h22v46h-22z" />
            <rect x="972.500" y="659.500" width="16" height="21" rx="4" /><circle cx="977.500" cy="665" r="2" /><path d="M969 670.500h10M971 667v7" stroke="#222" />
            <rect x="972.500" y="689.500" width="14" height="14" rx="2" /><circle cx="978" cy="696.500" r="4" />
            <!-- toilets -->
            <path d="M864 628.500h36q-1 30-36 34M852 645.500h35M864 678.500h47M913 628.500h25q-2 24-25 24M925.500 623v65" />
            <ellipse cx="888" cy="692" rx="12" ry="8" /><ellipse cx="939.500" cy="670" rx="8" ry="11" />
            <!-- stairs -->
            <path d="M724 586l36-34 31 31-21 21M760 555l28 28M724 586l14 5-2 7 9-9-2 11 8-9 19 13M732 579l9 9M740 572l29 30M748 565l28 30M755 558l28 30M756 577l1 8 9-1-4-4 14-14" />
            <path d="M724 586l-27 27v84h116v-46h-73v-20l30-28M727 590l-28 26v79h114M742 651v-20M753.500 651v46M763.500 651v46M773.500 651v46M783.500 651v46M793.500 651v46M803.500 651v46M714 597l26 30M722 592l26 30M731 590l26 27M740 594l22 16" stroke-dasharray="5 3" />
            <path d="M757 561h19v13h-19z" fill="#fff" stroke="none" />
            <!-- section marks -->
            <g fill="#0f35c4" stroke="none">
              <path d="M490 640l9 33h-9zM1310 640v33h-9zM1048 325h35v9z" />
              <path d="M1048 823l35-10v10z" fill="#111" />
            </g>
            <path d="M490 673.500h44M1257 673.500h53M1083.500 334v38M1083.500 775v38" />
            <!-- grid bubbles -->
            <g fill="#fff" stroke="#777">
              <circle cx="608" cy="911" r="29.500" /><circle cx="925" cy="911" r="29.500" /><circle cx="1197" cy="911" r="29.500" />
              <circle cx="1361" cy="385" r="29.500" /><circle cx="1361" cy="484.500" r="29.500" /><circle cx="1361" cy="711" r="29.500" />
            </g>
            <g class="btext">
              <text x="607" y="920">A</text><text x="924" y="920">B</text><text x="1196" y="920">C</text>
              <text x="1360" y="395">3</text><text x="1360" y="495">2</text><text x="1360" y="720">1</text>
            </g>
            <g class="ltext"><text x="737" y="319">事務所</text><text x="737" y="349">便所</text></g>
            <g class="rtext"><text x="872" y="553">事務所</text><text x="888" y="660">便所</text></g>
            <g class="atext"><text x="872" y="569">55.37 m²</text><text x="888" y="676">4.60 m²</text><text x="767" y="572">UP</text></g>
            <g class="stext"><text x="499" y="655">A断面</text><text x="1310" y="655">A断面</text><text x="1087" y="310">B断面</text><text class="dark" x="1087" y="799">B断面</text></g>
          </svg>
          <div class="navbar">
            <svg viewBox="0 0 38 130" fill="none" stroke="#8c8c8c" stroke-width="1.500" aria-hidden="true">
              <circle cx="30" cy="8" r="4" /><path d="M28 6l4 4M32 6l-4 4" />
              <path d="M12 20h12q3 0 3 4v18H15q-9 0-9-9 0-13 6-13z" /><circle cx="16" cy="31" r="9" /><circle cx="16" cy="31" r="5" />
              <path d="M16 56h6l-3 4zM16 105h6l-3 4z" fill="#8c8c8c" stroke="none" /><path d="M3 64h32" stroke="#ccc" />
              <path d="M10 76l10 10M20 76L10 86" stroke-dasharray="3 2" /><path d="M9 77v-2h2M19 75h2v2M9 85v2h2" /><circle cx="22" cy="87" r="4" fill="#f4f4f4" /><path d="M25 90l4 4" stroke-width="2" />
              <circle cx="30" cy="121" r="4" /><path d="M28 121h4" />
            </svg>
            <b>2D</b>
          </div>
        </div>
        <div class="vbar">{@render icon('up')}<i></i>{@render icon('down')}</div>
      </div>
      <div class="viewbar">
        <span class="scale">1 : 100</span>
        {#each viewTools as i}<button aria-label={i}>{@render icon(i)}</button>{/each}
        <div class="hbar"><i></i></div>
        {@render icon('right')}
        <svg class="grip" viewBox="0 0 12 12" aria-hidden="true"><path d="M9 0h2v2H9zM5 4h2v2H5zM9 4h2v2H9zM1 8h2v2H1zM5 8h2v2H5zM9 8h2v2H9z" fill="#aaa" /></svg>
      </div>
    </section>

    <aside class="props">
      <div class="phead"><span>プロパティ</span><button aria-label="閉じる">{@render icon('close')}</button></div>
      <div class="type">
        <div class="thumb">
          <svg viewBox="0 0 38 38" fill="none" stroke="#556" aria-hidden="true"><path d="M24 3h11v12H24z" fill="#c9d2dc" stroke-width="1.500" /><path d="M2 1h22v14h-8v20H2z" fill="#d3dae3" stroke-width="1.500" /><path d="M16 15h21v22H16z" fill="#f1f4f8" stroke-width="1.500" /><path d="M24 1v14M16 15v20M16 15h20" stroke="#223" stroke-dasharray="2 2" /></svg>
        </div>
        <span>平面図</span>{@render tri()}
      </div>
      <div class="inst">
        <div class="sel"><select class="full" aria-label="インスタンス"><option>平面図: 1階平面図（着色１）</option></select>{@render icon('down')}</div>
        <button>{@render icon('types')}タイプ編集</button>
      </div>
      <div class="sheet">
        <div class="tablebox">
          <table>
            <colgroup><col class="c1" /><col /><col class="c3" /></colgroup>
            <tbody>
              {#each props as r, n}
                {#if r.k === 'head'}
                  <tr class="head"><th colspan="2">{r.l}</th><td><svg viewBox="0 0 8 12" fill="none" aria-hidden="true"><path d="M2 4l2-2 2 2M2 8l2-2 2 2" stroke="#444" /></svg></td></tr>
                {:else}
                  <tr class:off={r.k === 'off'}>
                    <th class:k={kana(r.l)} class:kk={r.l.length > 13}><label for={`p${n}`}>{r.l}</label></th>
                    <td class="v" class:k={kana(r.v ?? '')}>
                      {#if r.k === 'btn'}<button id={`p${n}`}>{r.v}</button>
                      {:else if r.k === 'input'}<input id={`p${n}`} type="text" value={r.v} />
                      {:else if r.k === 'check'}<input id={`p${n}`} type="checkbox" />
                      {:else}<output id={`p${n}`}>{r.v}</output>{/if}
                    </td>
                    <td></td>
                  </tr>
                {/if}
              {/each}
            </tbody>
          </table>
        </div>
        <div class="vbar pbar">{@render icon('up')}<i></i>{@render icon('down')}</div>
      </div>
      <div class="pfoot"><a href="#help">プロパティ ヘルプ</a><button disabled>適用</button></div>
    </aside>
  </main>

  <div class="status">
    <span class="hint">選択＝クリック、次へ＝[Tab]、追加＝[Ctrl]、選択解除＝[Shift]。</span>
    {@render icon('workset')}
    <div class="sel"><select aria-label="ワークセット"><option></option></select>{@render icon('down')}</div>
    <span class="pair">{@render icon('filterg')}:0</span>
    {@render icon('options')}
    {@render icon('goto')}
    <div class="sel"><select class="k" aria-label="デザイン オプション"><option>メイン モデル</option></select>{@render icon('down')}</div>
    <div class="tools">{#each selTools as i}<button aria-label={i}>{@render icon(i)}</button>{/each}<span>:0</span></div>
  </div>

  <footer class="taskbar">
    <button aria-label="スタート">{@render icon('win')}</button>
    <button aria-label="Cortana">{@render icon('cortana')}</button>
    <button aria-label="タスク ビュー">{@render icon('taskview')}</button>
    <button aria-label="エクスプローラー"><svg viewBox="0 0 28 26" aria-hidden="true"><path d="M1 2h9l3 3h14v19H1z" fill="#f7cf6b" /><path d="M1 2h9l2 3H1z" fill="#e0a93a" /><path d="M6 14h16v10h-5v-5h-6v5H6z" fill="#2f9fe0" /></svg></button>
    <button class="run" aria-label="録画"><svg viewBox="0 0 28 28" aria-hidden="true"><circle cx="14" cy="14" r="13.500" fill="#fff200" /></svg></button>
    <button class="run" aria-label="OBS"><svg viewBox="0 0 28 28" fill="none" aria-hidden="true"><circle cx="14" cy="14" r="12.500" fill="#1d1b1f" stroke="#ddd" stroke-width="1.500" /><path d="M11 4q-3 6 3 9 5 1 4-5M14 13q6-2 9 3M23 18q-4 5-8 1-2-3-1-6M14 14q-2 7-9 4" stroke="#cfcfcf" stroke-width="2" /></svg></button>
    <button class="run cur" aria-label="Revit"><span class="rbox">{@render icon('revit')}</span></button>
    <div class="tray">
      <svg class="chev" viewBox="0 0 18 12" fill="none" aria-hidden="true"><path d="M1 10l8-8 8 8" stroke="#fff" stroke-width="2" /></svg>
      {@render icon('dropbox')}
      <svg class="kb" viewBox="0 0 28 18" fill="none" stroke="#fff" aria-hidden="true"><rect x="1" y="1" width="26" height="16" stroke-width="1.500" /><path d="M4 5h20M4 9h20" stroke-width="2" stroke-dasharray="2 1" /><path d="M7 13h14" stroke-width="2" /></svg>
      <span class="ime">あ</span>
      <span class="note"><svg viewBox="0 0 22 22" aria-hidden="true"><path d="M0 0h20v15H9l-5 5v-5H0z" fill="#fff" /><path d="M3 4h14M3 7h14M3 10h14" stroke="#223" stroke-width="1.500" /></svg><b>13</b></span>
    </div>
  </footer>

  <svg class="pointer" viewBox="0 0 30 34" aria-hidden="true"><circle cx="12" cy="12" r="11" fill="#eee33f" /><path d="M12 13v19l4-4 3 6 4-2-3-5h6z" fill="#fff" stroke="#777" /></svg>
  <div class="mark"></div>
  <svg class="caption" viewBox="0 0 930 100" aria-label="プロパティ→カラースキーム">
    <defs><linearGradient id="blue" x1="0" y1="0" x2="0" y2="1"><stop offset="0.450" stop-color="#1d62ff" /><stop offset="0.750" stop-color="#0008fa" /></linearGradient></defs>
    <text x="10" y="75">プロパティ<tspan class="arrow">→</tspan>カラースキーム</text>
  </svg>
</div>
<div class="banner">用途別に着色する</div>

<style>
  :global(body) { margin: 0; background: #fff; }
  .frame, .banner { font-family: "Noto Sans", "Noto Sans CJK JP", sans-serif; }
  .frame { position: relative; width: 84.375%; min-height: 100vh; margin: 0 auto; display: flex; flex-direction: column; background: #cbcbcb; color: #3a3a3a; font-size: 14px; font-weight: 300; line-height: 20px; font-feature-settings: "palt"; white-space: nowrap; }
  .frame :global(*) { box-sizing: border-box; }
  button, input, select { font: inherit; color: inherit; font-feature-settings: inherit; border: 0; padding: 0; margin: 0; background: none; }
  h1, h2, ul { margin: 0; padding: 0; font-weight: inherit; }
  .full { font-feature-settings: normal; }
  .ic { width: 20px; height: 20px; flex: none; display: block; }
  .tri { width: 8px; height: 5px; fill: #222; flex: none; }

  .titlebar { display: flex; align-items: center; height: 36px; padding: 0 0 4px 2px; }
  .q, .qa { display: grid; place-items: center; width: 28px; height: 28px; flex: none; }
  .q.n { width: 22px; }
  .qa { width: 21px; }
  .gap { width: 9px; flex: none; }
  .sep { width: 1px; height: 28px; margin: 0 3px 0 4px; background: #b2b2b2; flex: none; }
  h1 { align-self: flex-start; margin-left: 76px; font-size: 14px; line-height: 28px; font-feature-settings: normal; }
  .search { display: flex; gap: 12px; align-items: center; margin-left: 92px; }
  .tl { width: 5px; height: 8px; fill: #222; }

  .tabs { display: flex; height: 24px; padding-left: 2px; }
  .tabs button { height: 24px; line-height: 24px; }
  .file { width: 61px; margin-right: 3px; background: #1f77b8; color: #fff; }
  .tab { width: 52px; text-align: center; }
  .t93 { width: 93px; } .t84 { width: 84px; } .t66 { width: 66px; } .t98 { width: 98px; }
  .tab.k { font-size: 13px; }
  .tabs .active { background: #eee; }
  .toggle { display: flex; gap: 5px; align-items: center; margin-left: 24px; }
  .toggle > svg:first-child { width: 18px; height: 12px; }

  .ribbon { display: flex; height: 113px; background: #eee; border-bottom: 1px solid #c6c6c6; }
  .g { display: flex; flex-direction: column; padding-top: 4px; border-right: 1px solid #dadada; }
  .g .body { display: grid; height: 84px; padding-left: 2px; }
  .g h2 { display: flex; gap: 8px; align-items: center; justify-content: center; height: 26px; font-size: 14px; position: relative; }
  .g-sel { width: 61px; } .g-dim { width: 410px; } .g-det { width: 256px; } .g-txt { width: 124px; } .g-tag { flex: 1; } .g-leg { width: 107px; } .g-sym { width: 125px; }
  .g-sel .body { padding: 0 7px; }
  .g-dim .body { grid-template-columns: 62px 62px 62px 102px 1fr; padding-left: 3px; }
  .g-det .body { grid-template-columns: 125px 1fr; }
  .g-tag .body { grid-template-columns: 54px 47px 117px 104px 123px 1fr; padding-left: 9px; }
  .g-sym .body { grid-template-columns: 48px 56px; }
  .modify { display: flex; flex-direction: column; align-items: center; gap: 9px; padding-top: 9px; border: 1px solid #2f6fd0; background: linear-gradient(#a9cdf2, #bddaf7); height: 85px; }
  .modify svg { width: 18px; height: 26px; }
  .col { display: grid; grid-template-rows: repeat(3, 28px); padding-left: 6px; min-width: 0; }
  .small { display: flex; align-items: center; gap: 6px; white-space: nowrap; }
  .small.k { font-size: 13px; gap: 5px; }
  .small:disabled { color: #aaa; }
  .small .tri { width: 6px; height: 4px; margin-left: 2px; }
  .small.k .tri { margin-left: 0; }
  .big { display: flex; flex-direction: column; align-items: center; min-width: 0; }
  .big svg { width: 38px; height: 38px; margin: 2px 0; }
  .big span { line-height: 26px; }
  .big.two span { line-height: 19px; font-size: 13px; padding-top: 3px; }
  .key { display: flex; flex-direction: column; align-items: center; border-left: 1px solid #c6c6c6; }
  .key .big { font-size: 13px; }
  .key .tri { width: 6px; height: 4px; }
  .grid6 { display: grid; grid-template: repeat(3, 28px) / 28px 28px; }
  .grid6 button { display: grid; place-items: center; }
  .launch { position: absolute; right: 4px; width: 8px; height: 8px; }
  .options { height: 33px; background: #eee; border-bottom: 2px solid #c6c6c6; }

  main { flex: 1; display: flex; min-height: 0; background: #dcdcdc; }
  .phead { display: flex; align-items: center; justify-content: space-between; height: 25px; padding: 0 1px 0 4px; background: #ececec; }
  .phead button, .doctab button { display: grid; }
  .phead .ic, .doctab button .ic { width: 18px; height: 18px; }
  .browser { width: 331px; border: solid #dcdcdc; border-width: 0 2px 0 1px; background: #fff; }
  ul { list-style: none; padding-top: 2px; }
  li { display: flex; align-items: center; height: 20px; }
  li > .ic { width: 19px; height: 19px; margin: 0 1px 0 2px; }
  li > span { padding: 0 4px; line-height: 20px; }
  li > .ic + span { padding-left: 2px; }
  li > .on { background: #e0e0e0; color: #111; font-weight: 500; }
  .cell { position: relative; display: grid; place-items: center; width: 24px; height: 20px; flex: none; }
  .cell:first-child { width: 23px; }
  .line { background: linear-gradient(#dedede, #dedede) 12px 0 / 1px 100% no-repeat; }
  .half { background: linear-gradient(#dedede, #dedede) 12px 0 / 1px 50% no-repeat; }
  .stem::before { content: ""; position: absolute; left: 12px; right: 0; top: 10px; height: 1px; background: #dedede; }
  .exp { position: relative; display: grid; place-items: center; width: 11px; height: 11px; border: 1px solid #b5b5b5; background: #f4f4f4; }
  .exp svg { width: 9px; height: 9px; }

  .view { flex: 1; min-width: 0; display: flex; flex-direction: column; border-left: 2px solid #c9c9c9; background: #fff; }
  .doctabs { display: flex; justify-content: space-between; align-items: center; height: 25px; background: #c9c9c9; padding-right: 4px; }
  .doctab { display: flex; align-items: center; width: 194px; height: 25px; padding: 0 2px 0 6px; background: #fff; color: #111; }
  .doctab b { font-weight: 500; margin: 0 auto 0 7px; }
  .canvasrow { flex: 1; display: flex; min-height: 0; }
  .canvas { position: relative; flex: 1; min-width: 0; min-height: 0; }
  .plan { position: absolute; inset: 0; width: 100%; height: 100%; }
  .plan text { stroke: none; fill: #111; font-family: "Liberation Sans", "Noto Sans CJK JP", sans-serif; font-weight: 400; }
  .plan .btext text { font-family: "Noto Sans CJK JP", sans-serif; font-size: 26px; text-anchor: middle; }
  .ltext text { font-size: 13px; }
  .rtext text { font-size: 19px; text-anchor: middle; font-feature-settings: normal; }
  .atext text { font-size: 13px; text-anchor: middle; }
  .plan .stext text { font-size: 13px; fill: #0f35c4; }
  .plan .stext .dark { fill: #333; }
  .navbar { position: absolute; right: 0; top: 2px; width: 38px; height: 130px; border: 1px solid #bbb; border-radius: 3px; background: rgba(245, 245, 245, 0.6); }
  .navbar svg { width: 38px; height: 130px; }
  .navbar b { position: absolute; right: 3px; top: 36px; font-size: 12px; line-height: 12px; font-weight: 600; color: #6f9fd0; background: #f5f5f5; }
  .vbar { display: flex; flex-direction: column; align-items: center; width: 24px; padding: 2px 4px 2px 0; background: #eee; }
  .vbar i { width: 18px; height: 20px; margin: auto; background: #c9c9c9; }
  .vbar .ic { width: 16px; height: 20px; }
  .viewbar { display: flex; align-items: center; height: 21px; padding-left: 36px; background: #eee; margin-bottom: 2px; }
  .scale { width: 66px; }
  .viewbar button { display: grid; place-items: center; width: 27px; }
  .viewbar .ic { width: 19px; height: 19px; }
  .hbar { flex: 1; display: flex; height: 18px; }
  .hbar i { width: 20px; margin-left: 48%; background: #c9c9c9; }
  .grip { width: 12px; height: 12px; margin: 6px 6px 0 14px; }

  .props { width: 355px; display: flex; flex-direction: column; border: solid #dcdcdc; border-width: 0 2px 0 3px; background: #eee; }
  .props .phead { height: 26px; padding-right: 0; border-bottom: 2px solid #8c8c8c; }
  .type { display: flex; align-items: center; height: 85px; padding: 0 3px 0 4px; border-bottom: 2px solid #8c8c8c; }
  .thumb { display: grid; place-items: center; width: 78px; height: 78px; border: 1px solid #ccc; }
  .thumb svg { width: 38px; height: 38px; }
  .type span { margin: 0 auto 0 5px; }
  .inst { display: flex; align-items: center; height: 25px; }
  .sel { position: relative; display: flex; align-items: center; }
  .sel select { appearance: none; width: 100%; height: 100%; }
  .sel .ic { position: absolute; right: 3px; width: 14px; height: 14px; opacity: 0.6; pointer-events: none; }
  .inst .sel { width: 270px; height: 24px; border: 1px solid #c9c9c9; background: #e0e0e0; }
  .inst select { padding-left: 2px; }
  .inst button { display: flex; align-items: center; gap: 2px; margin-left: 2px; font-size: 13px; }
  .inst button .ic { width: 11px; height: 11px; }
  .sheet { flex: 1; display: flex; min-height: 0; }
  .tablebox { flex: 1; padding-bottom: 3px; background: #fff; }
  table { width: 100%; height: 100%; border-collapse: collapse; table-layout: fixed; }
  tr { height: 22px; }
  .c1 { width: 157px; } .c3 { width: 14px; }
  th, td { padding: 0; font-weight: inherit; text-align: left; line-height: 18px; border: solid #dedede; border-width: 0 1px 1px 0; overflow: hidden; }
  th { padding-left: 9px; }
  th.k, td.k { font-size: 13px; }
  th.kk { font-size: 12px; }
  td.v { padding-left: 1px; }
  .head th { padding-left: 2px; }
  .head th, .head td { background: #dcdcdc; border-color: #dcdcdc; }
  .head svg { display: block; width: 8px; height: 12px; margin-left: 2px; }
  .off { color: #858585; }
  td button { display: block; width: 100%; height: 20px; line-height: 17px; border: 1px solid #b5b5b5; border-width: 1px 1px 2px 1px; background: #e0e0e0; font-size: 14px; text-align: center; }
  td input[type="text"] { display: block; width: 100%; height: 20px; padding-left: 6px; border: 1px solid #777; background: #fff; }
  td input[type="checkbox"] { display: block; appearance: none; width: 16px; height: 16px; border: 1px solid #333; background: #fff; }
  .pbar { width: 21px; padding: 2px 0; }
  .pbar i { flex: 1; width: 19px; margin: 0 0 184px; }
  .pfoot { display: flex; justify-content: space-between; height: 28px; padding: 0 0 4px 2px; }
  .pfoot a { color: #1a68c4; font-size: 13px; }
  .pfoot button { width: 95px; background: #cbcbcb; color: #8a8a8a; }

  .status { display: flex; align-items: center; height: 30px; padding: 0 2px 2px 2px; }
  .hint { width: 535px; }
  .status .sel { width: 240px; height: 21px; margin-left: 7px; background: #fff; color: #808080; }
  .status select { padding-left: 3px; }
  .status select.k { font-size: 13px; }
  .pair { display: flex; align-items: center; width: 54px; padding-left: 5px; }
  .status .pair + .ic { margin-right: 6px; }
  .tools { display: flex; align-items: center; margin-left: auto; padding-right: 35px; }
  .tools button { display: grid; place-items: center; width: 26px; }

  .taskbar { display: flex; height: 47px; background: #03121a; }
  .taskbar > button { display: grid; place-items: center; width: 58px; border-bottom: 3px solid transparent; }
  .taskbar > button > svg { width: 28px; height: 28px; }
  .taskbar > button > .ic { width: 21px; height: 21px; }
  .taskbar .run { background: linear-gradient(#7fd0f0, #7fd0f0) center 44px / 48px 3px no-repeat; background-origin: border-box; background-clip: border-box; }
  .taskbar .cur { background-size: 58px 3px; background-color: #3b484e; }
  .rbox { display: grid; place-items: center; width: 28px; height: 28px; background: #dcecf8; }
  .rbox .ic { width: 22px; height: 24px; }
  .tray { display: flex; align-items: center; margin-left: auto; padding-right: 23px; margin-right: 4px; border-right: 1px solid #56646b; color: #fff; }
  .chev { width: 18px; height: 12px; margin-right: 19px; }
  .tray > .ic { margin-right: 19px; }
  .kb { width: 28px; height: 18px; margin-right: 13px; }
  .ime { width: 36px; font-size: 20px; font-weight: 400; }
  .note { position: relative; width: 22px; height: 22px; }
  .note svg { width: 22px; height: 22px; }
  .note b { position: absolute; left: 8px; top: 8px; width: 22px; height: 22px; border: 1px solid #aaa; border-radius: 50%; background: #333c42; font-size: 12px; line-height: 20px; text-align: center; font-weight: 600; }

  .pointer { position: absolute; right: 35px; top: 632px; width: 30px; height: 34px; }
  .mark { position: absolute; right: 28px; top: 618px; width: 345px; height: 54px; border: 9px solid #ff1400; border-radius: 9px; }
  .caption { position: absolute; left: 390px; top: 735px; width: 930px; height: 100px; overflow: visible; filter: drop-shadow(6px 6px 1px rgba(110, 110, 110, 0.5)); }
  .caption text { font-family: "Noto Sans CJK JP", sans-serif; font-size: 70px; font-weight: 700; font-feature-settings: normal; fill: url(#blue); stroke: #fff; stroke-width: 8px; paint-order: stroke; stroke-linejoin: round; }
  .caption .arrow { font-weight: 300; }
  .banner { position: absolute; top: 0; right: 0; width: 534px; height: 58px; background: #2f4696; color: #fff; font-size: 30px; line-height: 54px; font-weight: 700; box-sizing: border-box; padding-left: 152px; white-space: nowrap; }
</style>
